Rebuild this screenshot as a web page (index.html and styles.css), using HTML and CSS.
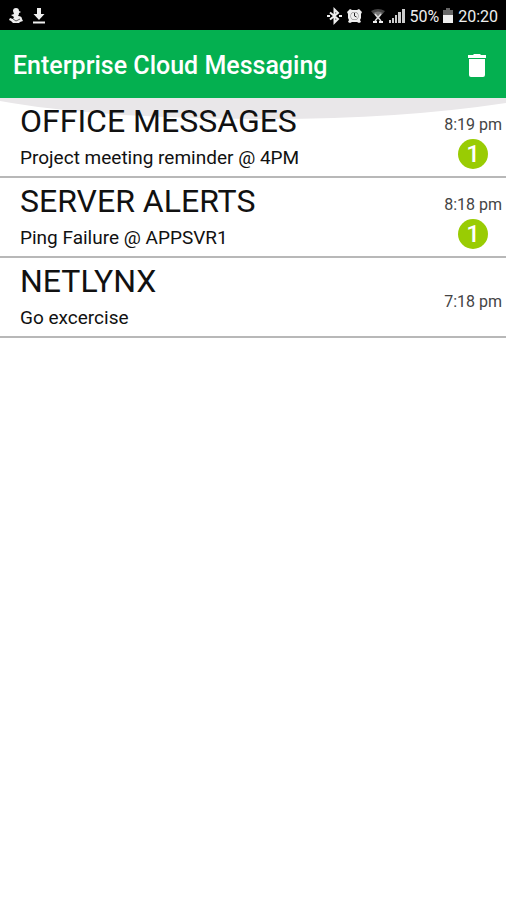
FILE: index.html
```html
<!DOCTYPE html>
<html lang="en">
<head>
<meta charset="utf-8">
<meta name="viewport" content="width=device-width, initial-scale=1">
<title>Enterprise Cloud Messaging</title>
<link rel="stylesheet" href="styles.css">
</head>
<body>
<div class="status">
  <div class="status-group notices">
    <svg width="16" height="18" viewBox="0 0 16 18" fill="#eee"><path d="M5 4q0-3 3-3t3 3l2 1-2 1q0 2-1 3 4 0 4 3l1 2-3 1-1 1H5l-2-2-2-1 1-2 3 1 1-2-3-2 3-1z"/><path d="M5 12l3 2 4-2" fill="none" stroke="#555"/></svg>
    <svg width="14" height="18" viewBox="0 0 14 18" fill="#eee"><path d="M5 1h4v6h3.500L7 13 1.500 7H5zM1 14.500h12v2H1z"/></svg>
  </div>
  <div class="status-group">
    <svg width="15" height="18" viewBox="0 0 15 18" fill="none" stroke="#eee" stroke-width="2"><path d="M3 5.500l8 6.500-3.500 3.500v-13L11 6l-8 6.500"/><path d="M0 9h3M12 9h3"/></svg>
    <svg class="alarm" width="17" height="18" viewBox="0 0 17 18"><path d="M1 5l3-3 2 1h5l2-1 3 3-1 2v4l-1 2 1 2-2 1-2-1H6l-2 1-2-1 1-2-1-2V7z" fill="#eee"/><circle cx="8.500" cy="9" r="4" fill="#777"/><circle cx="8.500" cy="9" r="3.600" fill="#eee"/><path d="M8.500 6v3l2 1" fill="none" stroke="#222"/></svg>
    <svg class="wifi" width="14" height="18" viewBox="0 0 14 18"><path d="M0 4q7-4 14 0l-2 2.500Q7 4 2 6.500z" fill="#444"/><path d="M2 6q5-3 10 0L8 11H6z" fill="#777"/><path d="M4 7l6 7M10 7l-6 7" stroke="#ddd" stroke-width="1.500"/><path d="M2 15h4M8 15h4" stroke="#eee" stroke-width="2"/></svg>
    <svg width="16" height="18" viewBox="0 0 16 18" fill="#ccc"><path d="M0 13h2v3H0zM3 11h2v5H3zM6 8h2v8H6zM9 5h3v11H9zM13 2h3v14h-3z"/></svg>
    <span class="percent">50%</span>
    <svg class="battery" width="10" height="18" viewBox="0 0 10 18"><path d="M3 1h4v2h3v6H0V3h3z" fill="#666"/><path d="M0 8h10v8H0z" fill="#eee"/></svg>
    <time class="clock">20:20</time>
  </div>
</div>
<header class="bar">
  <h1>Enterprise Cloud Messaging</h1>
  <button type="button" aria-label="Delete"><svg width="20" height="26" viewBox="0 0 20 26" fill="#fff"><path d="M7 1h6l1 1h5v3H1V2h5zM2 6h16v16a2 2 0 0 1-2 2H4a2 2 0 0 1-2-2z"/></svg></button>
</header>
<main>
  <svg class="arc" viewBox="0 0 506 22" preserveAspectRatio="none" aria-hidden="true"><path d="M0 0h506v5Q400 21 270 21Q100 21 0 3z" fill="#e9e7e9"/></svg>
  <ul>
    <li>
      <div class="message"><h2>OFFICE MESSAGES</h2><p>Project meeting reminder @ 4PM</p></div>
      <div class="meta"><time>8:19 pm</time><span class="badge">1</span></div>
    </li>
    <li>
      <div class="message"><h2>SERVER ALERTS</h2><p>Ping Failure @ APPSVR1</p></div>
      <div class="meta"><time>8:18 pm</time><span class="badge">1</span></div>
    </li>
    <li>
      <div class="message"><h2>NETLYNX</h2><p>Go excercise</p></div>
      <div class="meta"><time>7:18 pm</time></div>
    </li>
  </ul>
</main>
</body>
</html>
```
FILE: styles.css
```css
* {
  box-sizing: border-box;
  margin: 0;
  padding: 0;
}

body {
  background: #fff;
  color: #111;
  font-family: Roboto, "Liberation Sans", sans-serif;
}

.status {
  display: flex;
  justify-content: space-between;
  align-items: center;
  height: 30px;
  padding: 2px 8px 0;
  background: #000;
  color: #eee;
  font-size: 16px;
}

.status-group {
  display: flex;
  align-items: center;
}

.notices {
  gap: 8px;
}

.alarm {
  margin-left: 4px;
}

.wifi {
  margin: 0 4px 0 8px;
}

.percent {
  margin-left: 4px;
}

.battery {
  margin: 0 5px 0 4px;
}

.bar {
  display: flex;
  justify-content: space-between;
  align-items: center;
  height: 68px;
  padding: 3px 19px 0 13px;
  background: #04b050;
  color: #fff;
}

.bar h1 {
  font-size: 25px;
  font-weight: 500;
  line-height: 32px;
}

.bar button {
  display: flex;
  border: 0;
  background: none;
}

main {
  position: relative;
}

.arc {
  position: absolute;
  top: 0;
  left: 0;
  width: 100%;
  height: 22px;
}

ul {
  position: relative;
  list-style: none;
}

li {
  display: flex;
  justify-content: space-between;
  align-items: center;
  min-height: 80px;
  padding: 4px 4px 0 20px;
  border-bottom: 2px solid #b8b8b8;
}

h2 {
  font-size: 32px;
  font-weight: 400;
  line-height: 38px;
}

.message p {
  font-size: 19px;
  line-height: 36px;
}

.meta {
  display: flex;
  flex-direction: column;
  align-items: center;
  gap: 4px;
  padding-top: 6px;
  color: #444;
  font-size: 16px;
  line-height: 20px;
}

.badge {
  width: 30px;
  height: 30px;
  border-radius: 50%;
  background: #99cc03;
  color: #fff;
  font-size: 24px;
  font-weight: 500;
  line-height: 30px;
  text-align: center;
}
```
